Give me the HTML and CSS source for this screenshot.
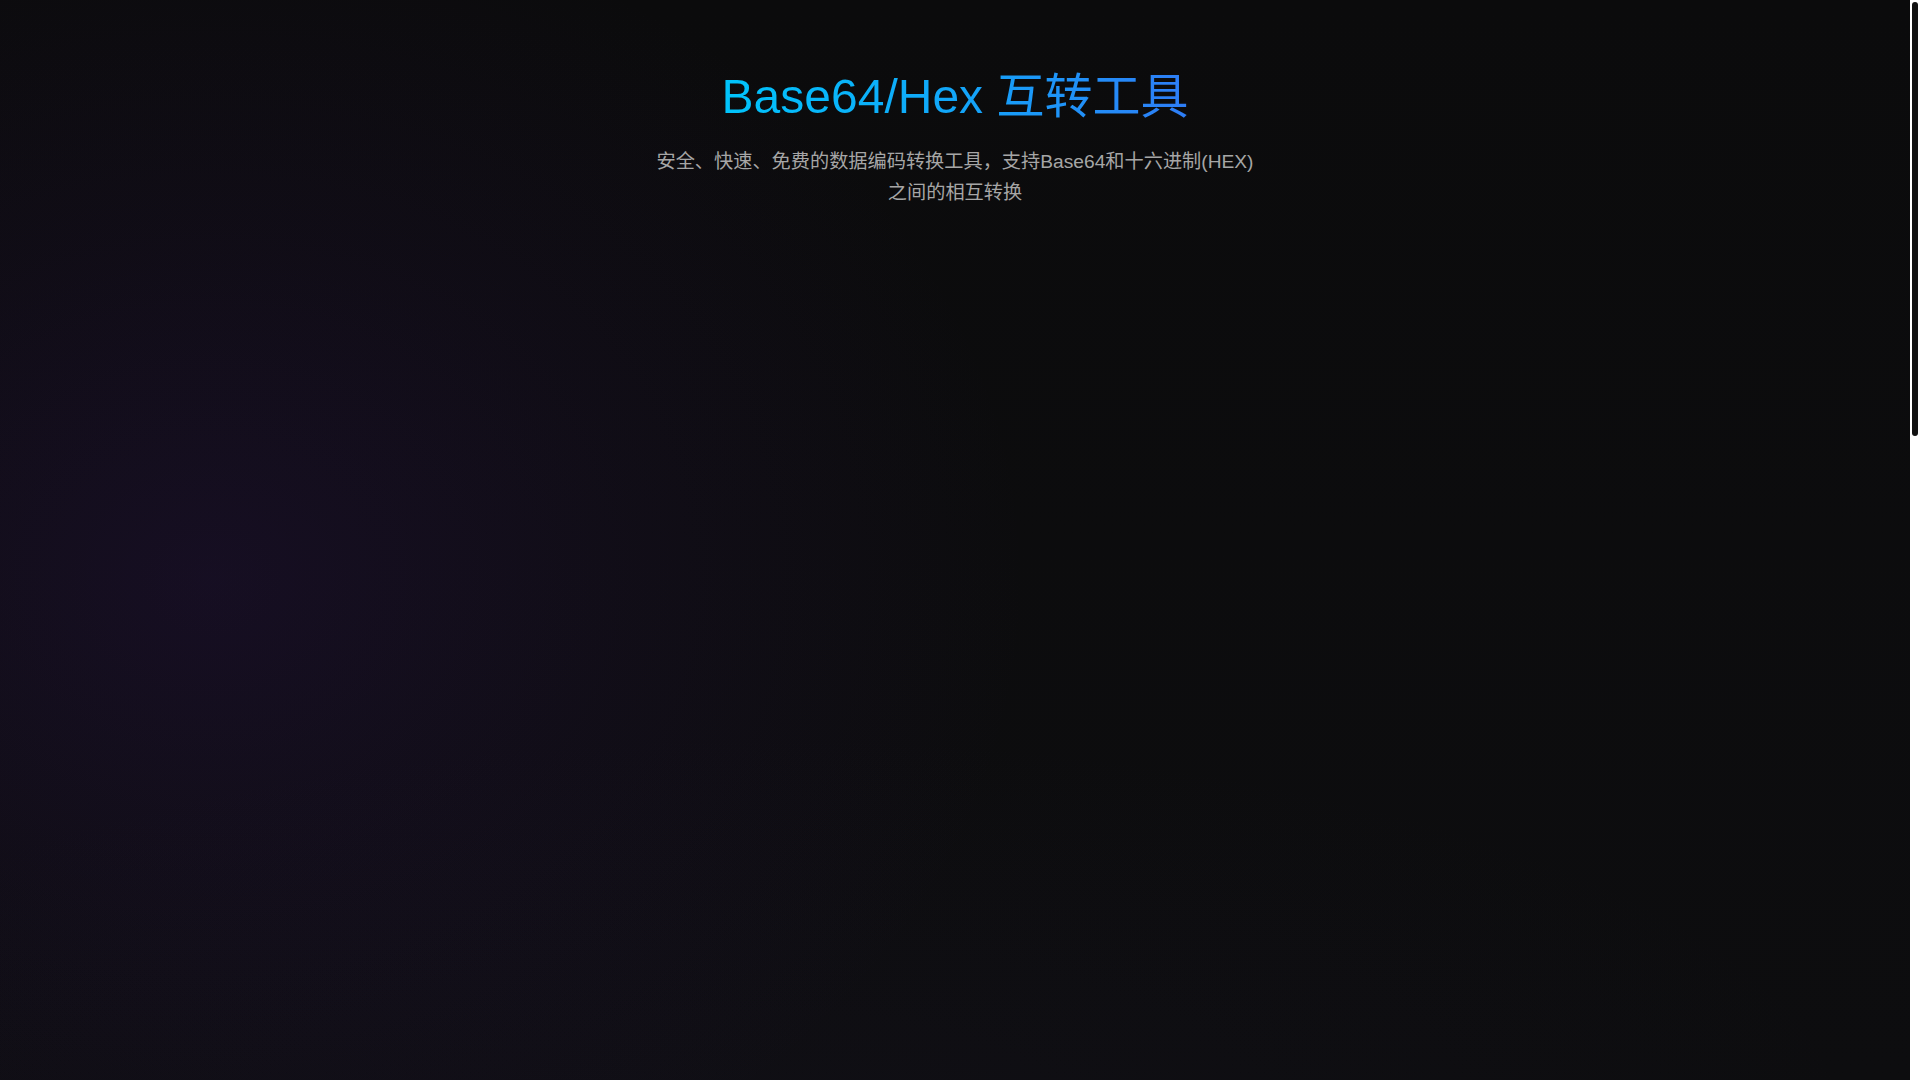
FILE: index.html
```html
<!DOCTYPE html>
<html lang="zh-CN">
<head>
<meta charset="utf-8">
<title>Base64/Hex 互转工具</title>
<link rel="stylesheet" href="styles.css">
</head>
<body>
<div class="page">
  <header class="hero">
    <h1 class="title">Base64/Hex 互转工具</h1>
    <p class="subtitle">安全、快速、免费的数据编码转换工具，支持Base64和十六进制(HEX)之间的相互转换</p>
  </header>
  <main class="tool"></main>
</div>
<aside class="scrollbar" aria-hidden="true">
  <div class="scrollbar-thumb"></div>
</aside>
</body>
</html>
```

FILE: styles.css
```css
html {
  height: 100%;
  overflow: hidden;
  background-color: #0d0d0e;
}

body {
  margin: 0;
  height: 100%;
  display: flex;
  font-family: "Liberation Sans", Arial, "Noto Sans CJK SC", sans-serif;
  color: #e0e0e0;
}

.page {
  flex: 1;
  min-width: 0;
  padding-top: 68px;
  background-color: #0c0c0e;
  background-image:
    radial-gradient(ellipse 820px 680px at 210px 580px, rgba(72, 26, 138, 0.17), rgba(72, 26, 138, 0.08) 50%, rgba(72, 26, 138, 0) 100%),
    radial-gradient(ellipse 1100px 400px at 40% 105%, rgba(40, 30, 70, 0.10), rgba(40, 30, 70, 0) 100%),
    linear-gradient(180deg, #0b0b0c 0%, #0d0d0f 100%);
}

.hero {
  display: flex;
  flex-direction: column;
  align-items: center;
  text-align: center;
  padding: 0 20px;
}

.title {
  margin: 0 0 20px;
  font-size: 48px;
  font-weight: 400;
  line-height: 1.2;
  background: linear-gradient(90deg, #00c4fb 0%, #12a6f9 50%, #2e7df6 100%);
  -webkit-background-clip: text;
  background-clip: text;
  color: transparent;
}

.subtitle {
  margin: 0;
  max-width: 600px;
  font-size: 19.2px;
  line-height: 1.62;
  color: #a6a6a6;
}

.scrollbar {
  flex: 0 0 10px;
  background: #ffffff;
  padding: 2px;
  box-sizing: border-box;
}

.scrollbar-thumb {
  height: 434px;
  background: #111111;
  border-radius: 3px;
}
```
